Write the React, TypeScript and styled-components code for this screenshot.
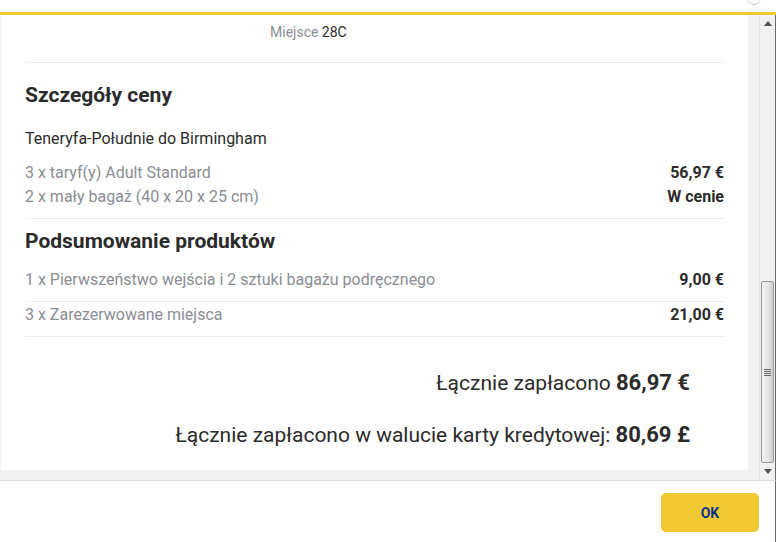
import styled, { createGlobalStyle } from "styled-components";

const GlobalStyle = createGlobalStyle`
  html, body {
    margin: 0;
    padding: 0;
    background: #fff;
  }
  body {
    font-family: Roboto, "Liberation Sans", sans-serif;
    color: #333;
  }
`;

type Line = { label: string; value: string };

const fareLines: Line[] = [
  { label: "3 x taryf(y) Adult Standard", value: "56,97 €" },
  { label: "2 x mały bagaż (40 x 20 x 25 cm)", value: "W cenie" },
];

const productLines: Line[] = [
  { label: "1 x Pierwszeństwo wejścia i 2 sztuki bagażu podręcznego", value: "9,00 €" },
  { label: "3 x Zarezerwowane miejsca", value: "21,00 €" },
];

export default function App() {
  return (
    <>
      <GlobalStyle />
      <Page>
        <TopBar>
          <CloseRing />
        </TopBar>
        <Accent />
        <Body>
          <ScrollArea>
            <Panel>
              <SeatLine>
                <Muted>Miejsce</Muted> 28C
              </SeatLine>
              <Divider />

              <SectionTitle $top={18}>Szczegóły ceny</SectionTitle>
              <Route>Teneryfa-Południe do Birmingham</Route>
              <FareList>
                {fareLines.map((l) => (
                  <FareRow key={l.label}>
                    <Muted>{l.label}</Muted>
                    <Value>{l.value}</Value>
                  </FareRow>
                ))}
              </FareList>
              <Divider />

              <SectionTitle $top={8}>Podsumowanie produktów</SectionTitle>
              <ProductList>
                {productLines.map((l) => (
                  <ProductRow key={l.label}>
                    <Muted>{l.label}</Muted>
                    <Value>{l.value}</Value>
                  </ProductRow>
                ))}
              </ProductList>

              <Totals>
                <TotalLine>
                  Łącznie zapłacono <Amount>86,97 €</Amount>
                </TotalLine>
                <TotalLine>
                  Łącznie zapłacono w walucie karty kredytowej: <Amount>80,69 £</Amount>
                </TotalLine>
              </Totals>
            </Panel>
          </ScrollArea>
          <Scrollbar>
            <Arrow>
              <svg width="8" height="5" viewBox="0 0 8 5">
                <path d="M0 5 L4 0 L8 5 Z" fill="#505050" />
              </svg>
            </Arrow>
            <Track>
              <Thumb>
                <Grip>
                  <i />
                  <i />
                  <i />
                  <i />
                </Grip>
              </Thumb>
            </Track>
            <Arrow>
              <svg width="8" height="5" viewBox="0 0 8 5">
                <path d="M0 0 L8 0 L4 5 Z" fill="#505050" />
              </svg>
            </Arrow>
          </Scrollbar>
        </Body>
        <Footer>
          <OkButton>OK</OkButton>
        </Footer>
      </Page>
    </>
  );
}

const Page = styled.div`
  width: 776px;
  height: 542px;
  display: flex;
  flex-direction: column;
  overflow: hidden;
`;

const TopBar = styled.div`
  position: relative;
  height: 12px;
  background: #fff;
`;

const CloseRing = styled.span`
  position: absolute;
  left: 747px;
  top: -9px;
  width: 12px;
  height: 12px;
  border: 1px solid #c8c8c8;
  border-radius: 50%;
`;

const Accent = styled.div`
  height: 3px;
  background: #f1c933;
`;

const Body = styled.div`
  display: flex;
  height: 465px;
  border-bottom: 1px solid #dcdcdc;
  border-right: 1px solid #6a6a6a;
`;

const ScrollArea = styled.div`
  flex: 1;
  display: flex;
  background: #f2f2f2;
  padding: 0 11px 10px 1px;
`;

const Panel = styled.div`
  flex: 1;
  background: #fff;
  padding: 0 24px;
  display: flex;
  flex-direction: column;
`;

const SeatLine = styled.div`
  margin-top: 7px;
  padding: 0 0 20px 245px;
  font-size: 14px;
  line-height: 20px;
  color: #2b2b2b;
`;

const Muted = styled.span`
  color: #8a8d96;
`;

const Divider = styled.div`
  height: 1px;
  background: #ececec;
`;

const SectionTitle = styled.h2<{ $top: number }>`
  margin: ${(p) => p.$top}px 0 0;
  font-size: 21px;
  line-height: 28px;
  font-weight: 700;
  color: #2b2b2b;
`;

const Route = styled.div`
  margin-top: 18px;
  font-size: 16px;
  line-height: 24px;
  color: #2b2b2b;
`;

const FareList = styled.div`
  margin-top: 10px;
  padding-bottom: 9px;
  display: flex;
  flex-direction: column;
`;

const FareRow = styled.div`
  display: flex;
  justify-content: space-between;
  font-size: 16px;
  line-height: 24px;
`;

const Value = styled.span`
  font-weight: 700;
  color: #2b2b2b;
`;

const ProductList = styled.div`
  margin-top: 13px;
  display: flex;
  flex-direction: column;
`;

const ProductRow = styled(FareRow)`
  padding-bottom: 9px;
  border-bottom: 1px solid #ececec;
  & + & {
    padding-top: 1px;
  }
`;

const Totals = styled.div`
  margin-top: 31px;
  padding-right: 34px;
  display: flex;
  flex-direction: column;
  align-items: flex-end;
  gap: 22px;
`;

const TotalLine = styled.div`
  font-size: 21px;
  line-height: 30px;
  color: #2b2b2b;
`;

const Amount = styled.strong`
  font-size: 22px;
  font-weight: 700;
`;

const Scrollbar = styled.div`
  width: 15px;
  display: flex;
  flex-direction: column;
  background: #f0f0f0;
  border-left: 1px solid #e6e6e6;
`;

const Arrow = styled.div`
  height: 17px;
  display: flex;
  align-items: center;
  justify-content: center;
`;

const Track = styled.div`
  flex: 1;
  display: flex;
  flex-direction: column;
  justify-content: flex-end;
`;

const Thumb = styled.div`
  height: 180px;
  margin: 0 1px;
  border: 1px solid #9a9a9a;
  border-radius: 2px;
  background: linear-gradient(to right, #f4f4f4, #e2e2e2 60%, #cfcfcf);
  display: flex;
  align-items: center;
  justify-content: center;
`;

const Grip = styled.div`
  display: flex;
  flex-direction: column;
  gap: 1px;
  & > i {
    display: block;
    width: 7px;
    height: 1px;
    background: #6b6b6b;
  }
`;

const Footer = styled.div`
  flex: 1;
  display: flex;
  justify-content: flex-end;
  align-items: flex-start;
  padding: 12px 16px 0 0;
  border-right: 1px solid #6a6a6a;
`;

const OkButton = styled.button`
  width: 98px;
  height: 39px;
  border: 0;
  border-radius: 5px;
  background: #f1c933;
  color: #073590;
  font-family: Roboto, "Liberation Sans", sans-serif;
  font-size: 14px;
  font-weight: 700;
  cursor: pointer;
`;
